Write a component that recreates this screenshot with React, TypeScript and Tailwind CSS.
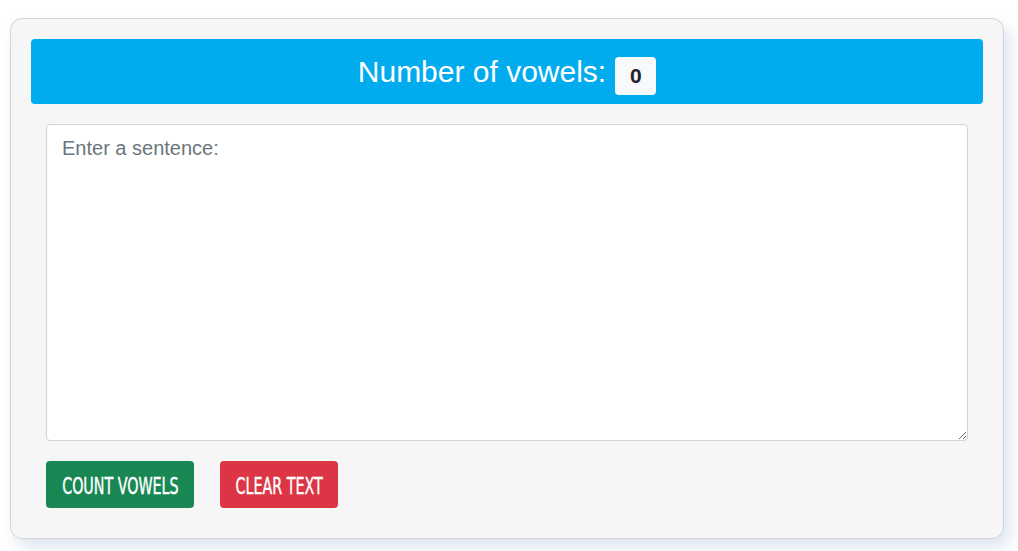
import React, { useState } from "react";

const App: React.FC = () => {
  const [text, setText] = useState("");
  const [count, setCount] = useState(0);

  const countVowels = () => {
    const matches = text.match(/[aeiou]/gi);
    setCount(matches ? matches.length : 0);
  };

  const clearText = () => {
    setText("");
    setCount(0);
  };

  // condensed look for the button labels
  const btnFont = {
    fontFamily: '"DejaVu Sans Condensed", "DejaVu Sans", sans-serif',
  };

  return (
    <div className="min-h-[551px] w-[1018px] bg-white pt-[18px] pl-[10px] font-['Liberation_Sans',Arial,sans-serif]">
      <div className="w-[994px] h-[521px] rounded-xl border border-[#cfd4da] bg-[#f6f6f6] px-5 pt-5 shadow-[6px_8px_16px_rgba(120,150,190,0.25)]">
        <div className="flex h-[65px] items-center justify-center gap-[9px] rounded bg-[#00acee]">
          <span className="text-[30px] text-white">Number of vowels:</span>
          <span className="mt-[8px] flex h-[38px] w-[41px] items-center justify-center rounded bg-[#f8f9fa] text-[21px] font-bold text-[#212529]">
            {count}
          </span>
        </div>
        <div className="px-[15px] pt-[20px]">
          <textarea
            value={text}
            onChange={(e) => setText(e.target.value)}
            placeholder="Enter a sentence:"
            className="block h-[317px] w-full resize-y rounded border border-[#ced4da] bg-white px-[15px] py-[8px] text-[20px] text-[#212529] placeholder:text-[#6c757d] outline-none"
          />
          <div className="mt-[20px] flex gap-[26px]">
            <button
              onClick={countVowels}
              style={btnFont}
              className="flex h-[47px] w-[148px] items-center justify-center rounded bg-[#198754] pt-[3px] text-white"
            >
              <span className="inline-block scale-x-[0.69] whitespace-nowrap text-[23px] uppercase [-webkit-text-stroke:0.4px_white]">Count Vowels</span>
            </button>
            <button
              onClick={clearText}
              style={btnFont}
              className="flex h-[47px] w-[118px] items-center justify-center rounded bg-[#dc3545] pt-[3px] text-white"
            >
              <span className="inline-block scale-x-[0.69] whitespace-nowrap text-[23px] uppercase [-webkit-text-stroke:0.4px_white]">Clear Text</span>
            </button>
          </div>
        </div>
      </div>
    </div>
  );
};

export default App;
